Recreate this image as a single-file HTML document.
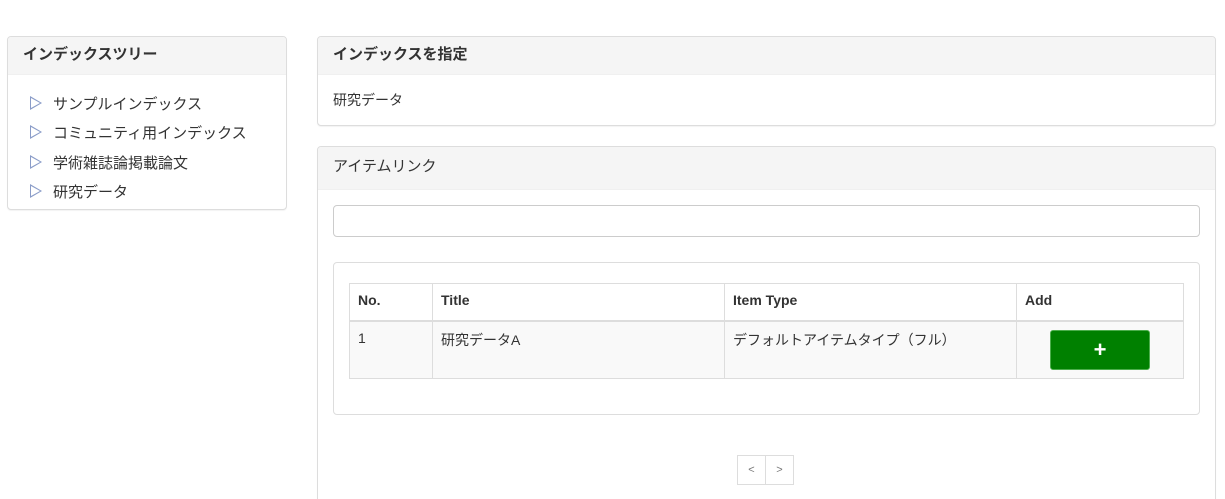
<!DOCTYPE html>
<html><head><meta charset="utf-8"><style>
*{box-sizing:border-box;margin:0;padding:0}
html,body{width:1225px;height:499px;overflow:hidden}
body{background:#fff;font-family:"Liberation Sans","Noto Sans CJK JP",sans-serif;font-size:14px;color:#333;position:relative}
.p{position:absolute;border:1px solid #ddd;border-radius:4px;background:#fff;box-shadow:0 1px 1px rgba(0,0,0,.05)}
.h{background:#f5f5f5;border-bottom:1px solid #f0f0f0;padding:0 15px;font-size:15px;border-radius:3px 3px 0 0}
.tree div{position:absolute;left:22px;font-size:15px}
.tri{display:inline-block;width:0;height:0;border-top:7px solid transparent;border-bottom:7px solid transparent;border-left:12px solid #8a9cc8;position:relative;margin-right:11px;vertical-align:-1px}
.tri:after{content:"";position:absolute;left:-11px;top:-5px;border-top:5px solid transparent;border-bottom:5px solid transparent;border-left:9px solid #fff}
table{position:absolute;left:15px;top:20px;width:835px;border-collapse:collapse}
td,th{border:1px solid #ddd;text-align:left;vertical-align:top;padding:8px 8px}
th{font-weight:bold;height:37px;border-bottom:2px solid #ddd;background:#fff}
td{height:57px;background:#f9f9f9}
</style></head><body>
<div class="p" style="left:7px;top:36px;width:280px;height:174px">
 <div class="h" style="height:38px;line-height:36px;font-weight:bold">インデックスツリー</div>
 <div class="tree">
  <div style="top:56px"><span class="tri"></span>サンプルインデックス</div>
  <div style="top:85px"><span class="tri"></span>コミュニティ用インデックス</div>
  <div style="top:115px"><span class="tri"></span>学術雑誌論掲載論文</div>
  <div style="top:144px"><span class="tri"></span>研究データ</div>
 </div>
</div>
<div class="p" style="left:317px;top:36px;width:899px;height:90px">
 <div class="h" style="height:38px;line-height:36px;font-weight:bold">インデックスを指定</div>
 <div style="padding:15px 15px">研究データ</div>
</div>
<div class="p" style="left:317px;top:146px;width:899px;height:400px">
 <div class="h" style="height:43px;line-height:40px">アイテムリンク</div>
 <div style="position:absolute;left:15px;top:58px;width:867px;height:32px;border:1px solid #ccc;border-radius:4px"></div>
 <div style="position:absolute;left:15px;top:115px;width:867px;height:153px;border:1px solid #ddd;border-radius:4px">
  <table>
   <tr><th style="width:83px">No.</th><th style="width:292px">Title</th><th style="width:292px">Item Type</th><th>Add</th></tr>
   <tr><td>1</td><td>研究データA</td><td>デフォルトアイテムタイプ（フル）</td><td style="padding-top:8px"><div style="margin-left:25px;width:100px;height:40px;background:#008000;border:1px solid #4cae4c;border-radius:3px;color:#fff;font-size:22px;font-weight:bold;text-align:center;line-height:38px">+</div></td></tr>
  </table>
 </div>
 <div style="position:absolute;left:419px;top:308px;width:57px;height:30px;border:1px solid #ddd;display:flex;font-size:11px;color:#777">
  <div style="width:28px;border-right:1px solid #ddd;text-align:center;line-height:28px">&lt;</div><div style="flex:1;text-align:center;line-height:28px">&gt;</div>
 </div>
</div>
</body></html>
